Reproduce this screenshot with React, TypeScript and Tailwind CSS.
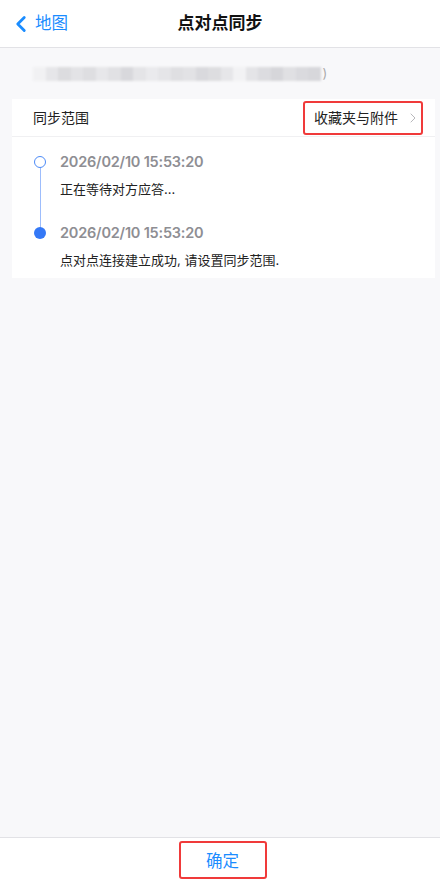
import { ChevronLeft, ChevronRight } from "lucide-react";

const font = { fontFamily: "Inter, 'Noto Sans CJK SC', sans-serif" };

// blurred (masked) device name blocks
const BLOCKS = [
  "#f1f1f3", "#e6e6e9", "#dcdcdf", "#e3e3e6", "#dedee1", "#e7e7ea", "#e1e1e4",
  "#d8d8dc", "#e4e4e7", "#eaeaed", "#e5e5e8", "#dfdfe2", "#e2e2e5", "#d9d9dd",
  "#dddde0", "#e6e6e9", "#f2f2f4", "#e4e4e7", "#dcdce0", "#d6d6da", "#e0e0e3",
  "#dadade", "#d7d7db",
];

function Timeline() {
  return (
    <div className="relative pl-[22px] pt-[13px] pb-[7px]">
      <div className="absolute left-[28px] top-[29px] h-[66px] w-px bg-[#9dbdfc]" />
      <div className="flex flex-col">
        <div className="flex items-center gap-[14px] h-[24px]">
          <div className="w-[12px] h-[12px] rounded-full border border-[#4d8bf7] bg-white z-10" />
          <span className="text-[14.5px] font-semibold text-[#8e8e93] tracking-[-0.2px]">2026/02/10 15:53:20</span>
        </div>
        <div className="pl-[26px] mt-[6px] text-[13px] text-[#222] h-[20px]">正在等待对方应答...</div>
        <div className="flex items-center gap-[14px] h-[24px] mt-[21px]">
          <div className="w-[12px] h-[12px] rounded-full bg-[#3478f6] z-10" />
          <span className="text-[14.5px] font-semibold text-[#8e8e93] tracking-[-0.2px]">2026/02/10 15:53:20</span>
        </div>
        <div className="pl-[26px] mt-[6px] text-[13px] text-[#222] h-[20px]">点对点连接建立成功, 请设置同步范围.</div>
      </div>
    </div>
  );
}

export default function App() {
  return (
    <div className="w-[440px] h-[888px] flex flex-col bg-[#f8f8fa]" style={font}>
      <header className="h-[48px] bg-white border-b border-[#e2e2e6] relative flex items-center">
        <div className="flex items-center pl-[8px] text-[#1a8cff]">
          <ChevronLeft className="w-[26px] h-[26px]" strokeWidth={2.6} />
          <span className="ml-[1px] text-[16.5px]">地图</span>
        </div>
        <div className="absolute inset-x-0 text-center text-[17px] font-semibold text-[#111] pointer-events-none">
          点对点同步
        </div>
      </header>

      <div className="h-[51px] flex items-center pl-[33px]">
        <div className="flex items-center blur-[1px]">
          {BLOCKS.map((c, i) => (
            <div key={i} className="h-[14px] w-[12.5px]" style={{ background: c }} />
          ))}
        </div>
        <span className="ml-[2px] text-[13px] text-[#aaa]">)</span>
      </div>

      <div className="ml-[12px] mr-[5px] bg-white">
        <div className="h-[38px] flex items-center justify-between pl-[21px] pr-[12px] border-b border-[#f0f0f2]">
          <span className="text-[14px] text-[#222]">同步范围</span>
          <div className="flex items-center h-[34px] w-[120px] pl-[9px] border-2 border-[#f03a3a] rounded-[3px]">
            <span className="text-[14px] text-[#222]">收藏夹与附件</span>
            <ChevronRight className="ml-[7px] w-[16px] h-[16px] text-[#b8b8bc]" strokeWidth={1.5} />
          </div>
        </div>
        <Timeline />
      </div>

      <div className="flex-1" />

      <footer className="h-[51px] bg-white border-t border-[#e2e2e6] flex justify-center pt-[3px]">
        <div className="ml-[5px] w-[88px] h-[38px] border-2 border-[#f03a3a] rounded-[3px] flex items-end justify-center pb-[3px]">
          <span className="text-[16.5px] text-[#1a8cff]">确定</span>
        </div>
      </footer>
    </div>
  );
}
